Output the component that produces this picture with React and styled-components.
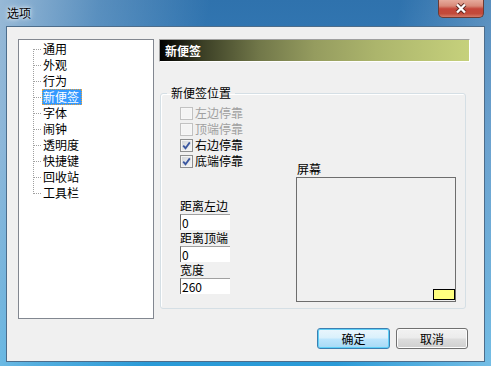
import styled, { createGlobalStyle } from 'styled-components';

const GlobalStyle = createGlobalStyle`
  html, body {
    margin: 0;
    padding: 0;
  }
  body {
    font-family: "Noto Sans CJK SC", "Noto Sans", sans-serif;
    font-size: 12px;
    color: #000;
    overflow: hidden;
  }
`;

const Window = styled.div`
  width: 491px;
  height: 366px;
  box-sizing: border-box;
  display: flex;
  flex-direction: column;
  background:
    linear-gradient(100deg, rgba(255, 255, 255, 0.5) 0%, rgba(255, 255, 255, 0.2) 18%, rgba(255, 255, 255, 0) 38%, rgba(255, 255, 255, 0) 72%, rgba(255, 255, 255, 0.35) 100%),
    linear-gradient(180deg, #2f72ad 0%, #3a83bf 40%, #2f8fcc 80%, #2a9bd8 100%);
`;

const TitleBar = styled.div`
  height: 26px;
  flex: none;
  display: flex;
  justify-content: space-between;
  align-items: flex-start;
  padding: 0 7px;
`;

const Title = styled.span`
  margin-top: 5px;
  line-height: 16px;
  text-shadow: 0 0 6px #fff, 0 0 3px rgba(255, 255, 255, 0.9);
`;

const CloseButton = styled.div`
  width: 46px;
  height: 18px;
  box-sizing: border-box;
  border: 1px solid #6b3b35;
  border-top: none;
  border-radius: 0 0 5px 5px;
  background: linear-gradient(180deg, #e6aa9c 0%, #d88a79 35%, #c4463a 52%, #c24a3a 80%, #d47a68 100%);
  display: flex;
  align-items: center;
  justify-content: center;
`;

const Client = styled.div`
  flex: 1;
  margin: 0 6px 4px;
  background: #f0f0f0;
  border: 1px solid #4d6d8b;
  display: flex;
  flex-direction: column;
  padding: 12px 0 0 11px;
`;

const MainRow = styled.div`
  display: flex;
  gap: 5px;
  height: 280px;
`;

const Tree = styled.div`
  flex: none;
  width: 136px;
  box-sizing: border-box;
  border: 1px solid #828790;
  background: #fff;
  padding-top: 1px;
`;

const TreeRow = styled.div`
  display: flex;
  height: 16px;
  align-items: center;
  padding-left: 14px;
`;

const TreeLabel = styled.span`
  height: 16px;
  box-sizing: border-box;
  line-height: 14px;
  border: 1px dotted ${(p) => (p.$selected ? '#e9a23c' : 'transparent')};
  padding: 0 2px 0 0;
  background: ${(p) => (p.$selected ? '#3399ff' : 'transparent')};
  color: ${(p) => (p.$selected ? '#fff' : '#000')};
  white-space: nowrap;
`;

const RightCol = styled.div`
  flex: none;
  width: 311px;
  display: flex;
  flex-direction: column;
`;

const Header = styled.div`
  height: 23px;
  box-sizing: border-box;
  border-top: 1px solid #a0a0a0;
  border-left: 1px solid #a0a0a0;
  border-right: 1px solid #fff;
  border-bottom: 1px solid #fff;
  background: linear-gradient(90deg, #000 0%, #3c4026 14%, #717749 32%, #959c5f 50%, #acb56c 70%, #c6d17c 100%);
  color: #fff;
  font-weight: bold;
  padding-left: 5px;
  line-height: 21px;
`;

const Group = styled.fieldset`
  margin: 23px 0 0 1px;
  width: 306px;
  box-sizing: border-box;
  border: 1px solid #d5dfe5;
  border-radius: 3px;
  padding: 0;
  box-shadow: inset 1px 1px 0 #fff;
`;

const Legend = styled.legend`
  margin-left: 6px;
  padding: 0 4px;
  line-height: 16px;
`;

const GroupBody = styled.div`
  height: 207px;
  display: flex;
`;

const LeftPart = styled.div`
  width: 135px;
  box-sizing: border-box;
  padding: 4px 0 14px 19px;
  display: flex;
  flex-direction: column;
`;

const CheckRow = styled.div`
  height: 16px;
  display: flex;
  align-items: center;
  gap: 2px;
  color: ${(p) => (p.$disabled ? '#a0a0a0' : '#000')};
  line-height: 16px;
`;

const Box = styled.span`
  width: 13px;
  height: 13px;
  box-sizing: border-box;
  border: 1px solid ${(p) => (p.$disabled ? '#c2c2c2' : '#8e8f8f')};
  background: ${(p) =>
    p.$disabled
      ? '#f4f4f4'
      : 'linear-gradient(135deg, #cfd3d8 0%, #e8e9ea 60%, #f8f8f8 100%)'};
  box-shadow: inset 0 0 0 1px ${(p) => (p.$disabled ? '#f7f7f7' : '#f4f4f4')};
  display: flex;
  align-items: center;
  justify-content: center;
`;

const Fields = styled.div`
  margin-top: auto;
  display: flex;
  flex-direction: column;
  gap: 1px;
`;

const FieldLabel = styled.div`
  height: 14px;
  line-height: 14px;
`;

const Input = styled.input`
  width: 50px;
  height: 16px;
  box-sizing: border-box;
  border: none;
  border-top: 1px solid #a0a0a0;
  border-left: 1px solid #696969;
  background: #fff;
  font: inherit;
  line-height: 15px;
  padding: 0 0 0 1px;
  outline: none;
`;

const ScreenPart = styled.div`
  display: flex;
  flex-direction: column;
  justify-content: flex-end;
  padding-bottom: 6px;
`;

const ScreenLabel = styled.div`
  line-height: 16px;
  padding-left: 1px;
`;

const Screen = styled.div`
  width: 160px;
  height: 125px;
  box-sizing: border-box;
  border: 1px solid #6d6d6d;
  display: flex;
  align-items: flex-end;
  justify-content: flex-end;
  padding: 0 0 1px;
`;

const Note = styled.div`
  width: 22px;
  height: 11px;
  box-sizing: border-box;
  border: 1px solid #000;
  background: #ffff80;
`;

const ButtonRow = styled.div`
  display: flex;
  justify-content: flex-end;
  gap: 6px;
  margin-top: 9px;
  padding-right: 16px;
`;

const Button = styled.button`
  width: ${(p) => p.$width}px;
  height: 21px;
  box-sizing: border-box;
  border: 1px solid ${(p) => (p.$default ? '#3c7fb1' : '#707070')};
  border-radius: 3px;
  background: ${(p) =>
    p.$default
      ? 'linear-gradient(180deg, #eaf6fd 0%, #d9f0fc 48%, #bee6fd 52%, #a7d9f5 100%)'
      : 'linear-gradient(180deg, #f2f2f2 0%, #ebebeb 48%, #dddddd 52%, #cfcfcf 100%)'};
  box-shadow: inset 0 0 0 1px ${(p) => (p.$default ? '#5fd0f7' : '#fcfcfc')};
  font: inherit;
  color: #000;
  line-height: 18px;
  padding: 0;
`;

const items = ['通用', '外观', '行为', '新便签', '字体', '闹钟', '透明度', '快捷键', '回收站', '工具栏'];

const Branch = ({ first, last }) => (
  <svg width="9" height="16" style={{ flex: 'none' }} shapeRendering="crispEdges">
    <line
      x1="0.5"
      y1={first ? 8 : 0}
      x2="0.5"
      y2={last ? 9 : 16}
      stroke="#a0a0a0"
      strokeDasharray="1 1"
    />
    <line x1="1" y1="8.5" x2="9" y2="8.5" stroke="#a0a0a0" strokeDasharray="1 1" />
  </svg>
);

const CheckMark = () => (
  <svg width="9" height="9" viewBox="0 0 9 9">
    <path d="M1.2 4.6 L3.5 7.2 L7.8 1.4" fill="none" stroke="#3a57a0" strokeWidth="1.8" />
  </svg>
);

const Check = ({ label, checked, disabled }) => (
  <CheckRow $disabled={disabled}>
    <Box $disabled={disabled}>{checked && <CheckMark />}</Box>
    {label}
  </CheckRow>
);

const App = () => {
  return (
    <Window>
      <GlobalStyle />
      <TitleBar>
        <Title>选项</Title>
        <CloseButton>
          <svg width="14" height="11" viewBox="0 0 14 11">
            <path d="M3 1.5 L11 9.5 M11 1.5 L3 9.5" stroke="#5a2620" strokeWidth="4" />
            <path d="M3 1.5 L11 9.5 M11 1.5 L3 9.5" stroke="#fff" strokeWidth="2.4" />
          </svg>
        </CloseButton>
      </TitleBar>
      <Client>
        <MainRow>
          <Tree>
            {items.map((name, i) => (
              <TreeRow key={name}>
                <Branch first={i === 0} last={i === items.length - 1} />
                <TreeLabel $selected={name === '新便签'}>{name}</TreeLabel>
              </TreeRow>
            ))}
          </Tree>
          <RightCol>
            <Header>新便签</Header>
            <Group>
              <Legend>新便签位置</Legend>
              <GroupBody>
                <LeftPart>
                  <Check label="左边停靠" disabled />
                  <Check label="顶端停靠" disabled />
                  <Check label="右边停靠" checked />
                  <Check label="底端停靠" checked />
                  <Fields>
                    <FieldLabel>距离左边</FieldLabel>
                    <Input readOnly value="0" />
                    <FieldLabel>距离顶端</FieldLabel>
                    <Input readOnly value="0" />
                    <FieldLabel>宽度</FieldLabel>
                    <Input readOnly value="260" />
                  </Fields>
                </LeftPart>
                <ScreenPart>
                  <ScreenLabel>屏幕</ScreenLabel>
                  <Screen>
                    <Note />
                  </Screen>
                </ScreenPart>
              </GroupBody>
            </Group>
          </RightCol>
        </MainRow>
        <ButtonRow>
          <Button $default $width={73}>确定</Button>
          <Button $width={72}>取消</Button>
        </ButtonRow>
      </Client>
    </Window>
  );
};

export default App;
